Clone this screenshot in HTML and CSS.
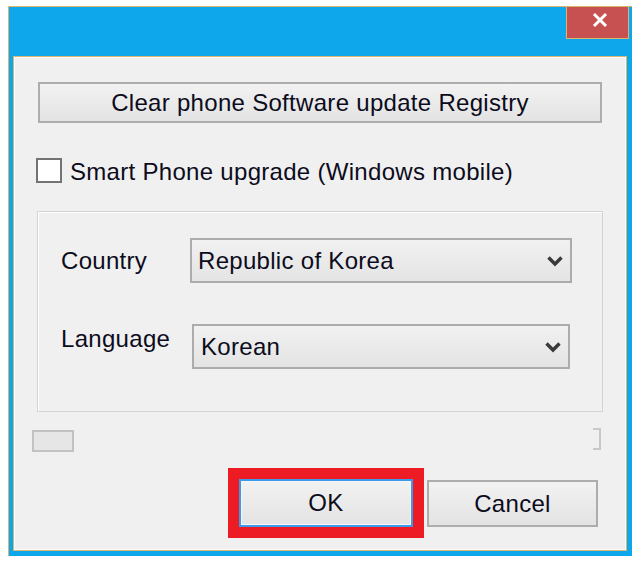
FILE: index.html
```html
<!DOCTYPE html>
<html>
<head>
<meta charset="utf-8">
<link rel="stylesheet" href="styles.css">
</head>
<body>
<div class="window">
  <div class="titlebar">
    <div class="close">
      <svg class="close-x" width="16" height="16" viewBox="0 0 16 16"><path d="M2 2 L14 14 M14 2 L2 14" stroke="#fff" stroke-width="3" fill="none"/></svg>
    </div>
  </div>
  <div class="content">
    <div class="btn btn-wide">Clear phone Software update Registry</div>
    <div class="check-row">
      <div class="checkbox"></div>
      <span class="check-label">Smart Phone upgrade (Windows mobile)</span>
    </div>
    <div class="group">
      <div class="label label-country">Country</div>
      <div class="combo combo-country">
        <span>Republic of Korea</span>
        <svg class="chev" width="16" height="11" viewBox="0 0 16 11"><path d="M1.5 1.5 L8 8 L14.5 1.5" stroke="#3a3a3a" stroke-width="3.4" fill="none"/></svg>
      </div>
      <div class="label label-lang">Language</div>
      <div class="combo combo-lang">
        <span>Korean</span>
        <svg class="chev" width="16" height="11" viewBox="0 0 16 11"><path d="M1.5 1.5 L8 8 L14.5 1.5" stroke="#3a3a3a" stroke-width="3.4" fill="none"/></svg>
      </div>
    </div>
    <div class="progress-row">
      <div class="progress-left"></div>
      <div class="progress-right"></div>
    </div>
    <div class="buttons">
      <div class="btn btn-ok">OK</div>
      <div class="btn btn-cancel">Cancel</div>
    </div>
  </div>
</div>
</body>
</html>
```
FILE: styles.css
```css
html, body {
  margin: 0;
  background: #ffffff;
}
body {
  font-family: "Liberation Sans", Arial, sans-serif;
  font-size: 24px;
  letter-spacing: 0.3px;
  color: #0c0c1c;
}
.window {
  margin: 6px 0 0 8px;
  width: 624px;
  height: 550px;
  box-sizing: border-box;
  background: #0fa7eb;
  border-top: 1px solid #d9b56d;
  border-left: 1px solid #d9b56d;
  padding: 0 5px 5px 4px;
  display: flex;
  flex-direction: column;
}
.titlebar {
  height: 49px;
  flex: none;
  display: flex;
  justify-content: flex-end;
  align-items: flex-start;
}
.close {
  margin-top: -1px;
  margin-right: -2px;
  width: 63px;
  height: 33px;
  box-sizing: border-box;
  background: #c75050;
  border: 1px solid #d9b56d;
  display: flex;
  justify-content: center;
  align-items: flex-start;
  padding-top: 5px;
}
.close-x {
  margin-left: 4px;
}
.content {
  height: 495px;
  flex: none;
  box-sizing: border-box;
  border: 1px solid #d9b56d;
  background: #f0f0f0;
  box-shadow: inset 1px 1px 0 #fbfbfb, inset -1px -1px 0 #fbfbfb;
  display: flex;
  flex-direction: column;
  align-items: flex-start;
}
.btn {
  box-sizing: border-box;
  border: 2px solid #adadad;
  background: linear-gradient(#f2f2f2, #e3e3e3);
  display: flex;
  align-items: center;
  justify-content: center;
}
.btn-wide {
  margin: 25px 0 0 24px;
  width: 564px;
  height: 41px;
}
.check-row {
  margin: 35px 0 0 22px;
  height: 25px;
  display: flex;
  align-items: center;
  gap: 8px;
}
.checkbox {
  width: 26px;
  height: 25px;
  box-sizing: border-box;
  border: 2px solid #737373;
  background: #ffffff;
}
.check-label {
  position: relative;
  top: 1px;
}
.group {
  margin: 28px 0 0 23px;
  width: 566px;
  height: 201px;
  box-sizing: border-box;
  border: 1px solid #d4d4d4;
  box-shadow: inset 1px 1px 0 #ffffff;
  padding: 26px 0 0 23px;
  display: grid;
  grid-template-columns: 129px 384px;
  grid-auto-rows: 45px;
  row-gap: 41px;
  align-items: start;
}
.label {
  line-height: 28px;
}
.label-country {
  padding-top: 9px;
}
.label-lang {
  padding-top: 1px;
}
.combo {
  height: 45px;
  box-sizing: border-box;
  border: 2px solid #acacac;
  background: linear-gradient(#f1f1f1, #e4e4e4);
  display: flex;
  align-items: center;
  justify-content: space-between;
  padding: 0 7px 0 6px;
}
.combo-country {
  width: 382px;
}
.combo-lang {
  width: 378px;
  margin-left: 2px;
  padding-left: 7px;
}
.chev {
  margin-top: 2px;
}
.progress-row {
  margin: 16px 0 0 18px;
  width: 569px;
  height: 24px;
  display: flex;
  justify-content: space-between;
}
.progress-left {
  align-self: flex-end;
  width: 42px;
  height: 22px;
  box-sizing: border-box;
  border: 2px solid #c2c2c2;
  background: #e6e6e6;
}
.progress-right {
  align-self: flex-start;
  width: 8px;
  height: 22px;
  box-sizing: border-box;
  border: 2px solid #c8c8c8;
  border-left: none;
}
.buttons {
  margin: 27px 0 0 225px;
  display: flex;
  gap: 14px;
  align-items: flex-start;
}
.btn-ok {
  width: 174px;
  height: 48px;
  border-color: #3d9ae8;
  box-shadow: inset 0 0 0 1px #f6f6f6;
  outline: 11px solid #ed1c24;
}
.btn-cancel {
  width: 171px;
  height: 47px;
  margin-top: 1px;
}
```
